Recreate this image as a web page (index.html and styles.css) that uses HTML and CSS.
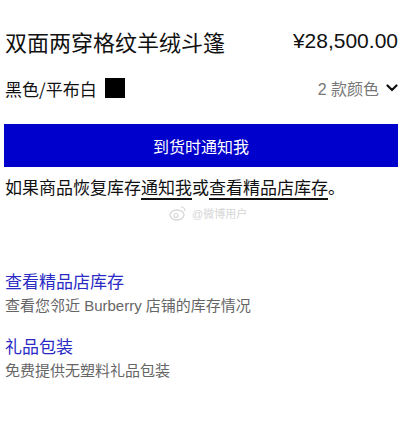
FILE: index.html
```html
<!DOCTYPE html>
<html lang="zh-CN">
<head>
    <meta charset="UTF-8">
    <meta name="viewport" content="width=device-width, initial-scale=1.0">
    <title>双面两穿格纹羊绒斗篷</title>
    <link rel="stylesheet" href="styles.css">
</head>
<body>
    <div class="product">
        <div class="title-row">
            <h1 class="product-name">双面两穿格纹羊绒斗篷</h1>
            <div class="price">¥28,500.00</div>
        </div>

        <div class="colour-row">
            <div class="colour-current">
                <span>黑色/平布白</span>
                <span class="swatch"></span>
            </div>
            <div class="colour-more">
                <span>2 款颜色</span>
                <svg class="chevron" width="12" height="8" viewBox="0 0 12 8">
                    <path d="M1.5 1.5 L6 6 L10.5 1.5" fill="none" stroke="#111" stroke-width="2.2" stroke-linecap="round" stroke-linejoin="round"/>
                </svg>
            </div>
        </div>

        <button class="notify-button">到货时通知我</button>

        <p class="stock-note">如果商品恢复库存<a href="#">通知我</a>或<a href="#">查看精品店库存</a>。</p>

        <div class="watermark">
            <svg width="18" height="16" viewBox="0 0 18 16">
                <ellipse cx="8" cy="10" rx="7" ry="5" fill="none" stroke="#d6d6d6" stroke-width="1.3"/>
                <circle cx="7" cy="10.5" r="2" fill="none" stroke="#d6d6d6" stroke-width="1.1"/>
                <path d="M12 2 A4 4 0 0 1 16 6" fill="none" stroke="#d6d6d6" stroke-width="1.2"/>
            </svg>
            <span>@微博用户</span>
        </div>

        <div class="service">
            <a href="#" class="service-link">查看精品店库存</a>
            <div class="service-desc">查看您邻近 Burberry 店铺的库存情况</div>
        </div>

        <div class="service">
            <a href="#" class="service-link">礼品包装</a>
            <div class="service-desc">免费提供无塑料礼品包装</div>
        </div>
    </div>
</body>
</html>
```

FILE: styles.css
```css
body {
    margin: 0;
    background-color: #ffffff;
    font-family: "Liberation Sans", "Noto Sans CJK SC", sans-serif;
    color: #111111;
}
.product {
    padding: 26px 12px 0 4px;
}
.title-row {
    display: flex;
    justify-content: space-between;
    align-items: center;
    height: 30px;
}
.product-name {
    margin: 0 0 0 1px;
    font-family: "Noto Sans CJK SC", sans-serif;
    font-size: 22px;
    font-weight: 400;
    line-height: 30px;
}
.price {
    font-size: 21px;
    line-height: 30px;
}
.colour-row {
    display: flex;
    justify-content: space-between;
    align-items: center;
    margin-top: 22px;
    height: 20px;
}
.colour-current {
    display: flex;
    align-items: center;
    gap: 8px;
    margin-left: 1px;
    font-family: "Noto Sans CJK SC", sans-serif;
    font-size: 17px;
}
.swatch {
    width: 20px;
    height: 20px;
    background-color: #000000;
}
.colour-more {
    display: flex;
    align-items: center;
    gap: 7px;
    font-size: 16px;
    color: #777777;
}
.notify-button {
    display: block;
    width: 100%;
    height: 43px;
    margin-top: 26px;
    border: none;
    background-color: #0000cc;
    color: #ffffff;
    font-family: "Noto Sans CJK SC", sans-serif;
    font-size: 16px;
    cursor: pointer;
}
.stock-note {
    margin: 8px 0 0 1px;
    font-family: "Noto Sans CJK SC", sans-serif;
    font-size: 17px;
    line-height: 24px;
}
.stock-note a {
    color: #111111;
    text-decoration: underline;
    text-decoration-thickness: 1.5px;
    text-underline-offset: 4px;
}
.watermark {
    display: flex;
    align-items: center;
    gap: 5px;
    margin: 4px 0 0 165px;
    height: 20px;
    font-size: 11px;
    color: #d6d6d6;
}
.service {
    margin-left: 1px;
}
.service + .service {
    margin-top: 18px;
}
.watermark + .service {
    margin-top: 47px;
}
.service-link {
    display: block;
    color: #2a2ac4;
    text-decoration: none;
    font-family: "Noto Sans CJK SC", sans-serif;
    font-size: 17px;
    line-height: 22px;
}
.service-desc {
    margin-top: 3px;
    color: #666666;
    font-size: 15px;
    line-height: 22px;
}
```
